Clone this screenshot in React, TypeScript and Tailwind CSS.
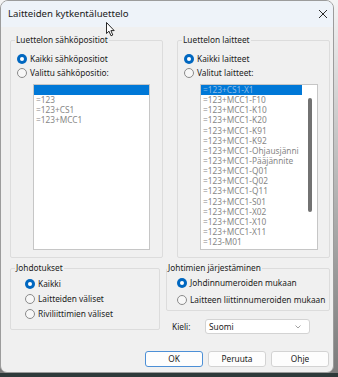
import React from "react";

function Radio({ checked, label, h = "h-[14px]" }: { checked?: boolean; label: string; h?: string }) {
  return (
    <div className={`flex items-center ${h}`}>
      {checked ? (
        <span className="w-[10px] h-[10px] rounded-full bg-[#0067c0] flex items-center justify-center shrink-0">
          <span className="w-[4px] h-[4px] rounded-full bg-white" />
        </span>
      ) : (
        <span className="w-[10px] h-[10px] rounded-full border border-[#8a8a8a] bg-[#f7f7f7] shrink-0" />
      )}
      <span className="ml-[3px] text-[8.3px] leading-[12px] text-[#1c1c1c] whitespace-nowrap">{label}</span>
    </div>
  );
}

function Legend({ text, ml }: { text: string; ml: string }) {
  return (
    <legend className={`${ml} px-[1px] text-[8.3px] leading-[12px] text-[#1c1c1c] whitespace-nowrap`}>{text}</legend>
  );
}

const list1 = ["=123", "=123+CS1", "=123+MCC1"];
const list2 = [
  "=123+MCC1-F10",
  "=123+MCC1-K10",
  "=123+MCC1-K20",
  "=123+MCC1-K91",
  "=123+MCC1-K92",
  "=123+MCC1-Ohjausjänni",
  "=123+MCC1-Pääjännite",
  "=123+MCC1-Q01",
  "=123+MCC1-Q02",
  "=123+MCC1-Q11",
  "=123+MCC1-S01",
  "=123+MCC1-X02",
  "=123+MCC1-X10",
  "=123+MCC1-X11",
  "=123-M01",
];

export default function App() {
  return (
    <div className="w-[338px] h-[377px] overflow-hidden flex flex-col bg-gradient-to-b from-[#f4f4f4] to-[#7a7a7a] font-['Noto_Sans',sans-serif]">
      <div className="relative w-[334px] h-[373px] shrink-0 rounded-t-[8px] rounded-b-[7px] border border-[#9c9c9c] bg-[#f0f0f0] overflow-hidden flex flex-col">
        {/* title bar */}
        <div className="h-[26px] shrink-0 bg-[#eef3f9] flex items-center justify-between pl-[7px] pr-[5px]">
          <span className="text-[9.6px] leading-[14px] text-[#1a1a1a]">Laitteiden kytkentäluettelo</span>
          <svg width="10" height="10" viewBox="0 0 10 10">
            <path d="M1 1 L9 9 M9 1 L1 9" stroke="#2a2a2a" strokeWidth="1" fill="none" />
          </svg>
        </div>

        {/* body */}
        <div className="flex-1 flex flex-col pl-[9px] pr-[3px] pt-[7px]">
          {/* top row */}
          <div className="flex gap-[14px]">
            <fieldset className="w-[153px] border border-[#dcdcdc] rounded-[2px] p-0 m-0">
              <Legend text="Luettelon sähköpositiot" ml="ml-[4px]" />
              <div className="pl-[6px] pt-[6px] pb-[7px]">
                <Radio checked label="Kaikki sähköpositiot" />
                <Radio label="Valittu sähköpositio:" />
                <div className="ml-[16px] mt-[4px] w-[117px] h-[166px] border border-[#c6c6c6] bg-white">
                  <div className="h-[10.15px] bg-[#0078d7]" />
                  {list1.map((t) => (
                    <div key={t} className="h-[10.15px] pl-[2px] text-[8.3px] leading-[10.15px] text-[#878787] whitespace-nowrap">
                      {t}
                    </div>
                  ))}
                </div>
              </div>
            </fieldset>

            <fieldset className="w-[153px] border border-[#dcdcdc] rounded-[2px] p-0 m-0">
              <Legend text="Luettelon laitteet" ml="ml-[4px]" />
              <div className="pl-[6px] pt-[6px] pb-[7px]">
                <Radio checked label="Kaikki laitteet" />
                <Radio label="Valitut laitteet:" />
                <div className="ml-[16px] mt-[4px] w-[118px] h-[166px] border border-[#c6c6c6] bg-white flex overflow-hidden">
                  <div className="w-[101px] overflow-hidden">
                    <div className="h-[10.15px] bg-[#0078d7] pl-[2px] text-[8.3px] leading-[10.15px] text-[#8fbbe6] whitespace-nowrap">
                      =123+CS1-X1
                    </div>
                    {list2.map((t) => (
                      <div key={t} className="h-[10.15px] pl-[2px] text-[8.3px] leading-[10.15px] text-[#878787] whitespace-nowrap">
                        {t}
                      </div>
                    ))}
                  </div>
                  <div className="flex-1 flex justify-center pt-[13px]">
                    <div className="w-[4px] h-[114px] rounded-[2px] bg-[#727272]" />
                  </div>
                </div>
              </div>
            </fieldset>
          </div>

          {/* bottom row */}
          <div className="flex gap-[6px] mt-[4px]">
            <fieldset className="w-[150px] border border-[#dcdcdc] rounded-[2px] p-0 m-0 self-start">
              <Legend text="Johdotukset" ml="ml-[4px]" />
              <div className="pl-[14px] pt-[2px] pb-[8px]">
                <Radio checked label="Kaikki" h="h-[15px]" />
                <Radio label="Laitteiden väliset" h="h-[15px]" />
                <Radio label="Riviliittimien väliset" h="h-[15px]" />
              </div>
            </fieldset>

            <div className="w-[164px] flex flex-col">
              <fieldset className="border border-[#dcdcdc] rounded-[2px] p-0 m-0">
                <Legend text="Johtimien järjestäminen" ml="ml-[0px]" />
                <div className="pl-[10px] pt-[1px] pb-[2px]">
                  <Radio checked label="Johdinnumeroiden mukaan" h="h-[16.5px]" />
                  <Radio label="Laitteen liittinnumeroiden mukaan" h="h-[16.5px]" />
                </div>
              </fieldset>
              <div className="flex items-center mt-[8px] pl-[6px]">
                <span className="w-[33px] text-[8.3px] leading-[12px] text-[#1c1c1c]">Kieli:</span>
                <div className="w-[105px] h-[15px] bg-white border border-[#d3d3d3] rounded-[3px] flex items-center justify-between pl-[3px] pr-[8px]">
                  <span className="text-[8.3px] leading-[12px] text-[#1c1c1c]">Suomi</span>
                  <svg width="6" height="4" viewBox="0 0 6 4">
                    <path d="M0.5 0.5 L3 3 L5.5 0.5" stroke="#8a8a8a" strokeWidth="0.8" fill="none" />
                  </svg>
                </div>
              </div>
            </div>
          </div>

          {/* buttons */}
          <div className="flex justify-end gap-[5px] mt-[17px] pr-[1px]">
            <button className="w-[58px] h-[16px] rounded-[3px] border border-[#4c8fd6] bg-[#fdfdfd] text-[8.3px] leading-[12px] text-[#1c1c1c]">OK</button>
            <button className="w-[58px] h-[16px] rounded-[3px] border border-[#d3d3d3] bg-[#fdfdfd] text-[8.3px] leading-[12px] text-[#1c1c1c]">Peruuta</button>
            <button className="w-[58px] h-[16px] rounded-[3px] border border-[#d3d3d3] bg-[#fdfdfd] text-[8.3px] leading-[12px] text-[#1c1c1c]">Ohje</button>
          </div>
        </div>

        {/* mouse cursor */}
        <svg className="absolute left-[105px] top-[21px]" width="10" height="15" viewBox="0 0 10 15">
          <path d="M0.5 0.5 L0.5 11.5 L3 9.2 L5 13.8 L6.8 13 L4.9 8.6 L8.2 8.6 Z" fill="white" stroke="#111" strokeWidth="0.9" strokeLinejoin="round" />
        </svg>
      </div>
      <div className="h-[4px] w-[338px] bg-[#2e3a3a]" />
    </div>
  );
}
